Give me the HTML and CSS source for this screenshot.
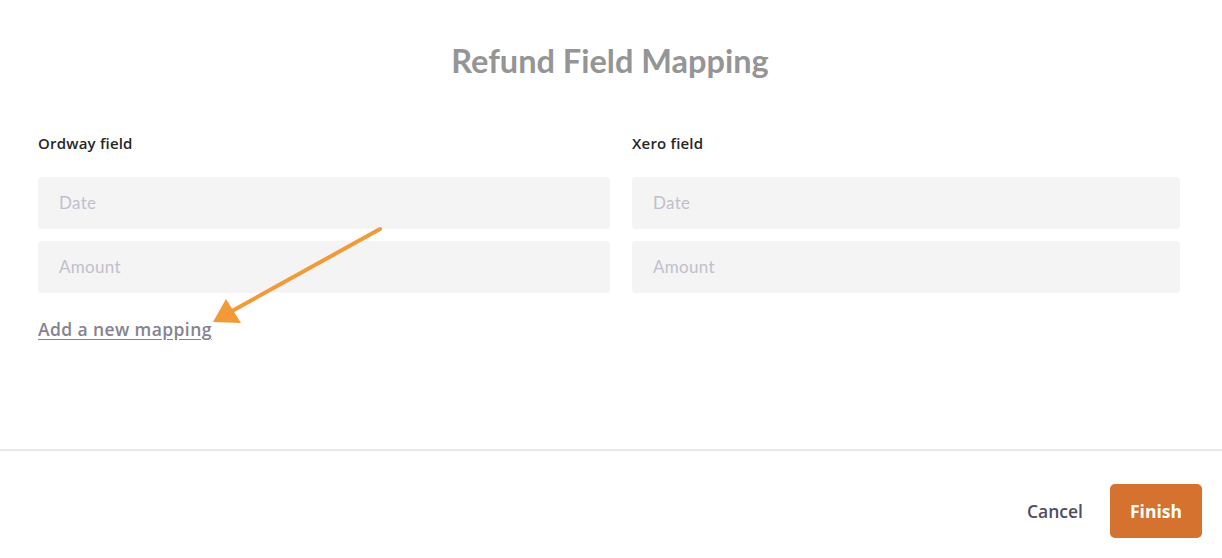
FILE: index.html
```html
<!DOCTYPE html>
<html>
	<head>
		<meta charset="UTF-8">
		<title>Refund Field Mapping</title>
		<link rel="stylesheet" href="styles.css">
	</head>
	<body>
		<div class="modal">
			<div class="body">
				<h2 class="title">Refund Field Mapping</h2>
				<div class="map">
					<div class="col left">
						<div class="label">Ordway field</div>
						<div class="field">Date</div>
						<div class="field">Amount</div>
						<a href="javascript:;" class="add">Add a new mapping</a>
					</div>
					<div class="col right">
						<div class="label">Xero field</div>
						<div class="field">Date</div>
						<div class="field">Amount</div>
					</div>
				</div>
				<!-- annotation arrow -->
				<svg class="arrow" width="1222" height="558" viewBox="0 0 1222 558">
					<line x1="380" y1="229" x2="232" y2="311" stroke="#f29a37" stroke-width="4" stroke-linecap="round"/>
					<polygon points="213,322 226,299 241,323" fill="#f29a37"/>
				</svg>
			</div>
			<div class="foot">
				<a href="javascript:;" class="cancel">Cancel</a>
				<a href="javascript:;" class="finish">Finish</a>
			</div>
		</div>
	</body>
</html>
```

FILE: styles.css
```css
*{margin: 0;padding: 0;box-sizing: border-box;}
body{background: #fff;font-family: "Lato", "Open Sans", sans-serif;width: 1222px;height: 558px;overflow: hidden;}
.modal{width: 1222px;height: 558px;display: flex;flex-direction: column;}
.body{height: 449px;position: relative;padding: 0 42px 0 38px;}
.title{text-align: center;font-size: 32.5px;font-weight: 700;color: #959595;padding-top: 42px;line-height: 38px;margin-left: 2px;}
.map{display: grid;grid-template-columns: 572px 548px;column-gap: 22px;margin-top: 53px;}
.label{font-family: "Open Sans", sans-serif;font-size: 15px;font-weight: 600;color: #262626;line-height: 20px;height: 24px;margin-bottom: 20px;letter-spacing: 0.2px;}
.field{height: 52px;background: #f4f4f4;border-radius: 4px;margin-bottom: 12px;padding-left: 21px;line-height: 52px;font-size: 17px;color: #c1bfcc;letter-spacing: 0.3px;}
.add{display: inline-block;margin-top: 12px;font-family: "Open Sans", sans-serif;font-size: 17.5px;font-weight: 600;color: #858391;text-decoration: underline;text-underline-offset: 3px;letter-spacing: 0.4px;}
.arrow{position: absolute;left: 0;top: 0;pointer-events: none;}
.foot{border-top: 2px solid #e7e7ea;flex: 1;display: flex;justify-content: flex-end;align-items: center;padding: 12px 20px 0 0;gap: 27px;}
.cancel{font-family: "Open Sans", sans-serif;font-size: 17.5px;font-weight: 600;color: #4f4d62;text-decoration: none;}
.finish{width: 92px;height: 54px;line-height: 54px;text-align: center;background: #d5722f;color: #fff;border-radius: 5px;font-family: "Open Sans", sans-serif;font-size: 17.5px;font-weight: 700;text-decoration: none;}
```
